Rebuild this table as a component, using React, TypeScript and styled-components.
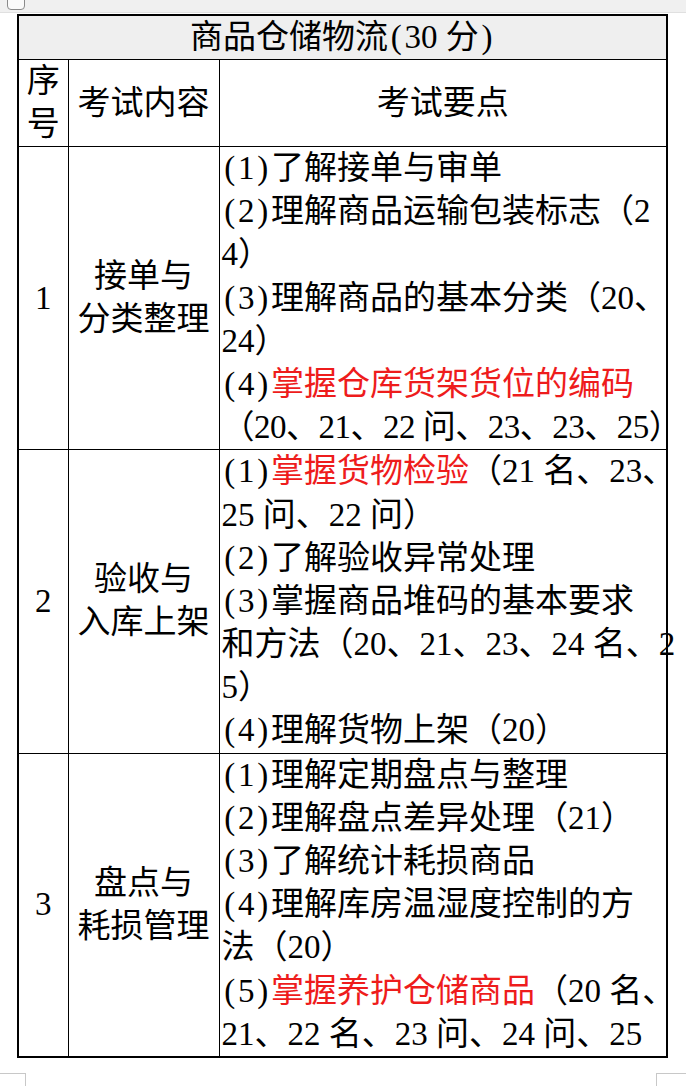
import React from "react";
import styled, { createGlobalStyle } from "styled-components";

const Global = createGlobalStyle`
  html, body {
    margin: 0;
    padding: 0;
    background: #fff;
  }
  body {
    font-family: "Liberation Serif", "Noto Sans CJK SC", serif;
    color: #000;
  }
`;

const Page = styled.div`
  width: 686px;
  height: 1086px;
  overflow: hidden;
  display: flex;
  flex-direction: column;
`;

const TopStrip = styled.div`
  flex-shrink: 0;
  height: 12px;
  background: #f0f0f0;
  border-bottom: 1px solid #e0e0e0;
  display: flex;
  align-items: flex-start;
  padding-left: 7px;
  overflow: hidden;
`;

const CornerBox = styled.div`
  width: 16px;
  height: 16px;
  margin-top: -8px;
  border: 1.5px solid #8a8a8a;
  border-radius: 4px;
  background: #fafafa;
`;

const Sheet = styled.table`
  margin: 1px 0 0 17px;
  width: 649px;
  border-collapse: collapse;
  border: 2px solid #000;
  table-layout: fixed;
  font-size: 33px;
`;

const Col = styled.col<{ $w: number }>`
  width: ${(p) => p.$w}px;
`;

const TitleCell = styled.td`
  border: 1px solid #000;
  background: #efefef;
  height: 43px;
  line-height: 43px;
  padding: 0;
  text-align: center;
  white-space: nowrap;
`;

const HeadCell = styled.td`
  border: 1px solid #000;
  padding: 0;
  line-height: 43px;
  text-align: center;
  vertical-align: middle;
`;

const IndexCell = styled.td`
  border: 1px solid #000;
  padding: 0;
  text-align: center;
  vertical-align: middle;
`;

const TopicCell = styled.td`
  border: 1px solid #000;
  padding: 0;
  line-height: 43px;
  text-align: center;
  vertical-align: middle;
`;

const PointsCell = styled.td`
  border: 1px solid #000;
  padding: 0 0 0 2px;
  vertical-align: top;
`;

const Line = styled.div<{ $tight?: boolean }>`
  height: 43.2px;
  line-height: 43.2px;
  white-space: nowrap;
  letter-spacing: ${(p) => (p.$tight ? "-0.5px" : "0")};
`;

const Hl = styled.span`
  color: #ee1c1c;
`;

const Half = styled.span`
  display: inline-block;
  width: 0.5em;
  text-align: center;
`;

const Footer = styled.div`
  display: flex;
  justify-content: space-between;
  margin-top: 15px;
`;

const CornerMark = styled.div<{ $side: "left" | "right" }>`
  width: ${(p) => (p.$side === "left" ? 25 : 29)}px;
  height: 14px;
  border-top: 1px solid #c8c8c8;
  ${(p) =>
    p.$side === "left"
      ? "border-right: 1px solid #c8c8c8;"
      : "border-left: 1px solid #c8c8c8;"}
`;

type Seg = string | { red: string };

type Section = {
  no: string;
  topic: string[];
  lines: Seg[][];
};

const sections: Section[] = [
  {
    no: "1",
    topic: ["接单与", "分类整理"],
    lines: [
      ["(1)了解接单与审单"],
      ["(2)理解商品运输包装标志（2"],
      ["4）"],
      ["(3)理解商品的基本分类（20、"],
      ["24）"],
      ["(4)", { red: "掌握仓库货架货位的编码" }],
      ["（20、21、22 问、23、23、25）"],
    ],
  },
  {
    no: "2",
    topic: ["验收与", "入库上架"],
    lines: [
      ["(1)", { red: "掌握货物检验" }, "（21 名、23、"],
      ["25 问、22 问）"],
      ["(2)了解验收异常处理"],
      ["(3)掌握商品堆码的基本要求"],
      ["和方法（20、21、23、24 名、2"],
      ["5）"],
      ["(4)理解货物上架（20）"],
    ],
  },
  {
    no: "3",
    topic: ["盘点与", "耗损管理"],
    lines: [
      ["(1)理解定期盘点与整理"],
      ["(2)理解盘点差异处理（21）"],
      ["(3)了解统计耗损商品"],
      ["(4)理解库房温湿度控制的方"],
      ["法（20）"],
      ["(5)", { red: "掌握养护仓储商品" }, "（20 名、"],
      ["21、22 名、23 问、24 问、25"],
    ],
  },
];

// half-width ascii brackets take half an em, as in the Song face of the original
const renderText = (s: string) =>
  s.split(/([()])/).map((part, i) =>
    part === "(" || part === ")" ? (
      <Half key={i}>{part}</Half>
    ) : part ? (
      <React.Fragment key={i}>{part}</React.Fragment>
    ) : null
  );

const renderSeg = (seg: Seg, i: number) =>
  typeof seg === "string" ? (
    <React.Fragment key={i}>{renderText(seg)}</React.Fragment>
  ) : (
    <Hl key={i}>{renderText(seg.red)}</Hl>
  );

// lines that run right up to the cell edge get squeezed a little
const isLong = (l: Seg[]) =>
  l.reduce((n, s) => n + (typeof s === "string" ? s : s.red).length, 0) > 20;

export default function App() {
  return (
    <>
      <Global />
      <Page>
        <TopStrip>
          <CornerBox />
        </TopStrip>
        <Sheet>
          <colgroup>
            <Col $w={50} />
            <Col $w={151} />
            <Col $w={448} />
          </colgroup>
          <tbody>
            <tr>
              <TitleCell colSpan={3}>{renderText("商品仓储物流(30 分)")}</TitleCell>
            </tr>
            <tr>
              <HeadCell>
                序<br />号
              </HeadCell>
              <HeadCell>考试内容</HeadCell>
              <HeadCell>考试要点</HeadCell>
            </tr>
            {sections.map((s) => (
              <tr key={s.no}>
                <IndexCell>{s.no}</IndexCell>
                <TopicCell>
                  {s.topic.map((t, i) => (
                    <div key={i}>{t}</div>
                  ))}
                </TopicCell>
                <PointsCell>
                  {s.lines.map((l, i) => (
                    <Line key={i} $tight={isLong(l)}>
                      {l.map(renderSeg)}
                    </Line>
                  ))}
                </PointsCell>
              </tr>
            ))}
          </tbody>
        </Sheet>
        <Footer>
          <CornerMark $side="left" />
          <CornerMark $side="right" />
        </Footer>
      </Page>
    </>
  );
}
